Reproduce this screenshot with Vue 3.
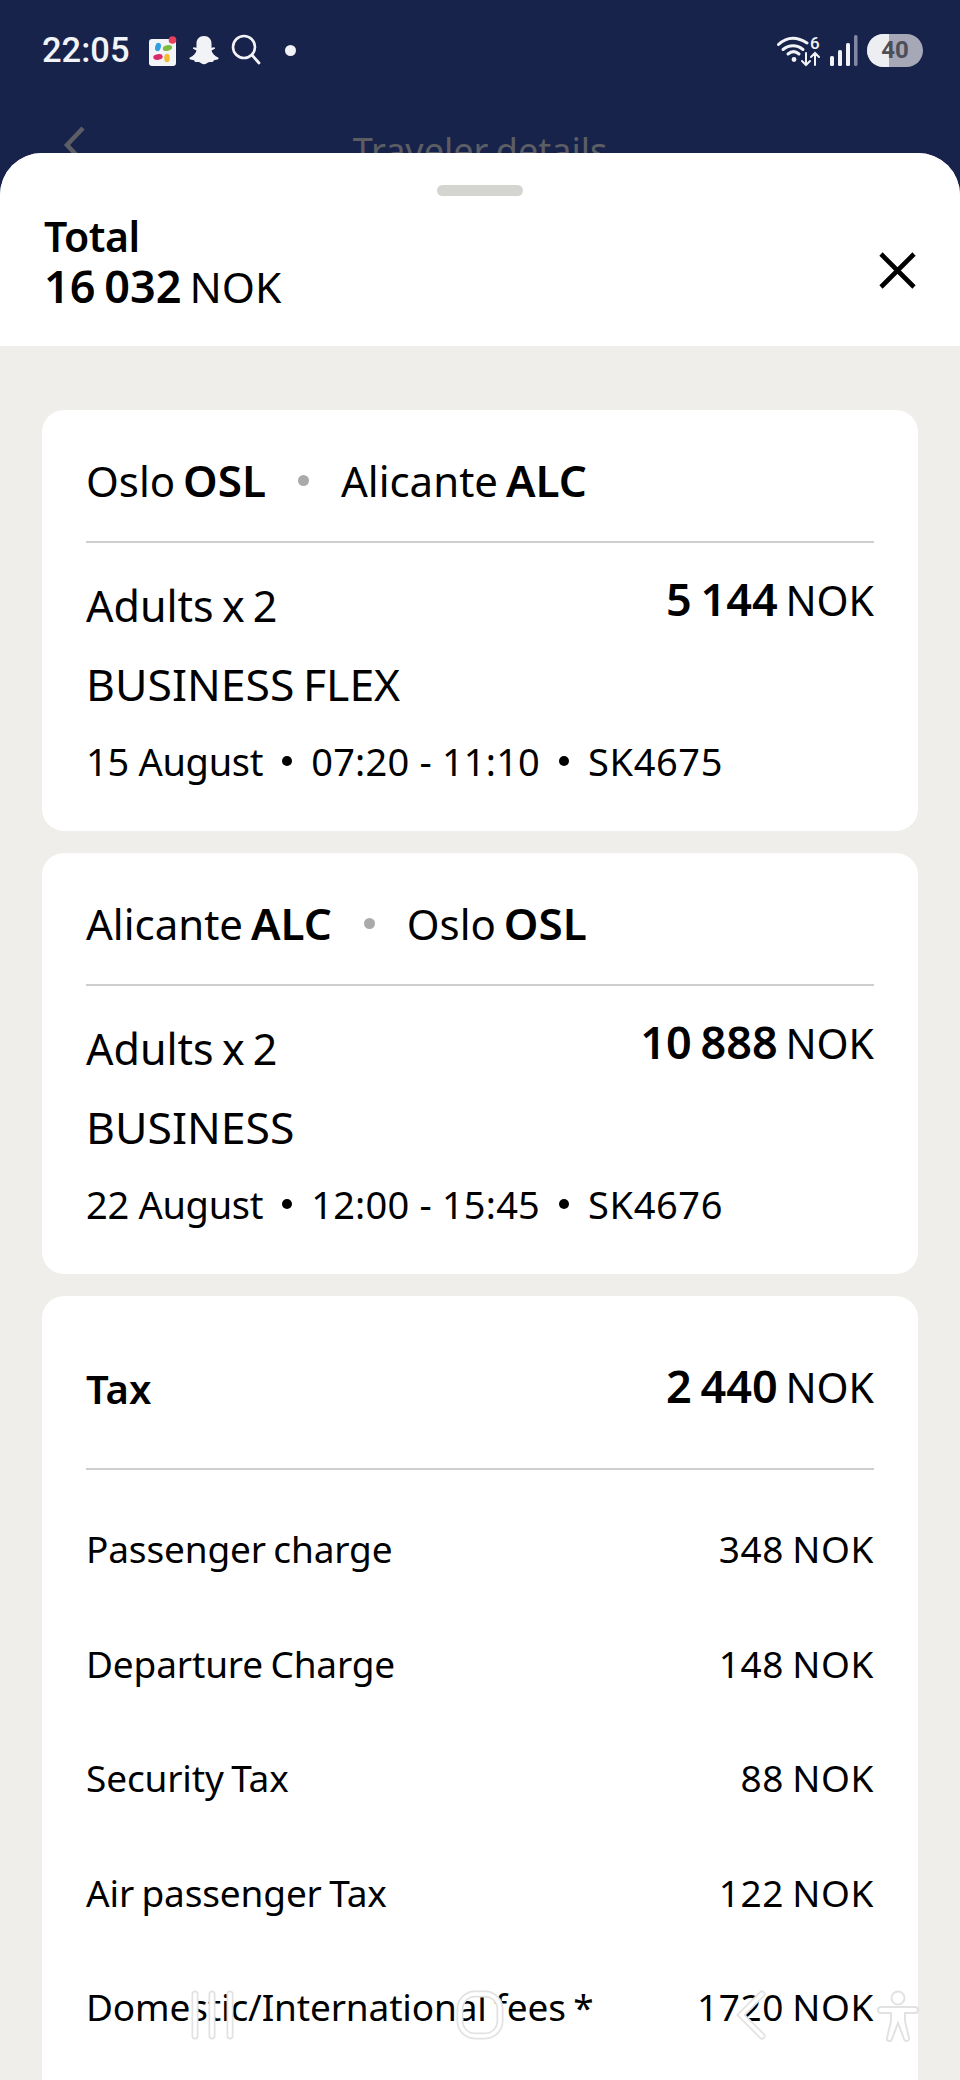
<script setup>
const flights = [
  { from: 'Oslo', fromCode: 'OSL', to: 'Alicante', toCode: 'ALC', price: '5 144', fare: 'BUSINESS FLEX', date: '15 August', time: '07:20 - 11:10', no: 'SK4675' },
  { from: 'Alicante', fromCode: 'ALC', to: 'Oslo', toCode: 'OSL', price: '10 888', fare: 'BUSINESS', date: '22 August', time: '12:00 - 15:45', no: 'SK4676' }
]
const taxes = [
  ['Passenger charge', '348 NOK'],
  ['Departure Charge', '148 NOK'],
  ['Security Tax', '88 NOK'],
  ['Air passenger Tax', '122 NOK'],
  ['Domestic/International fees *', '1720 NOK']
]
</script>

<template>
  <div class="screen">
    <div class="top">
      <div class="status">
        <div class="status-left">
          <span class="clock">22:05</span>
          <svg class="ic-slack" width="30" height="32" viewBox="0 0 30 32">
            <rect x="0" y="5" width="27" height="27" rx="3" fill="#f3f4f8"/>
            <ellipse cx="9" cy="13" rx="2.800" ry="4.200" fill="#2f9fe0" transform="rotate(15 9 13)"/>
            <ellipse cx="18.500" cy="14" rx="4.800" ry="2.800" fill="#7dbb3f" transform="rotate(-15 18.500 14)"/>
            <ellipse cx="9" cy="23" rx="4.800" ry="2.800" fill="#d92a6c" transform="rotate(-10 9 23)"/>
            <ellipse cx="18" cy="24" rx="2.800" ry="4.200" fill="#efbc34"/>
            <circle cx="23.500" cy="6" r="3.800" fill="#e8405a"/>
          </svg>
          <svg class="ic-snap" width="32" height="32" viewBox="0 0 34 32">
            <path d="M17 1c5 0 8 3.500 8 8v4.500l3-.5c1 .5 1 1.500 0 2l-3 1.500c.5 3 3.500 6 7 7.500 1 .5.500 1.500-.5 2l-4 1c-.5 1.500-1 2-2.500 1.800-2-.3-3.500 0-5 1.200-2 1.500-4 1.500-6 0-1.500-1.200-3-1.500-5-1.200-1.500.2-2-.3-2.500-1.800l-4-1c-1-.5-1.500-1.500-.5-2 3.500-1.500 6.500-4.500 7-7.500l-3-1.500c-1-.5-1-1.500 0-2l3 .5V9c0-4.500 3-8 8-8z" fill="#f2f3f7"/>
          </svg>
          <svg class="ic-search" width="30" height="32" viewBox="0 0 30 32">
            <circle cx="13" cy="13" r="11" fill="none" stroke="#f2f3f7" stroke-width="2.600"/>
            <path d="M21 21l7 8" stroke="#f2f3f7" stroke-width="2.800" stroke-linecap="round"/>
          </svg>
          <span class="dot"></span>
        </div>
        <div class="status-right">
          <svg class="ic-wifi" width="44" height="34" viewBox="0 0 44 34" fill="none" stroke="#f2f3f7" stroke-linecap="round">
            <path d="M1.500 11.500C10 3.500 20 3.500 30 10" stroke-width="3"/>
            <path d="M6 16.500c6-5 14-5 20 0" stroke-width="3"/>
            <path d="M11 21c3.500-3 7.500-3 11 0" stroke-width="3"/>
            <circle cx="17" cy="26.500" r="2.400" fill="#f2f3f7" stroke="none"/>
            <path d="M29 20v12m-4-4l4 4 4-4M38 32V20m-4 4l4-4 4 4" stroke-width="2"/>
            <text x="33" y="16" class="six">6</text>
          </svg>
          <svg width="30" height="32" viewBox="0 0 30 32">
            <rect x="1" y="22" width="4" height="10" rx="1.500" fill="#f2f3f7"/>
            <rect x="9" y="16" width="4" height="16" rx="1.500" fill="#f2f3f7"/>
            <rect x="17" y="9" width="4" height="23" rx="1.500" fill="#f2f3f7"/>
            <rect x="25" y="1" width="3.500" height="31" rx="1.500" fill="#8288a4"/>
          </svg>
          <div class="battery"><span class="fill"></span><span class="pct">40</span></div>
        </div>
      </div>
      <div class="nav">
        <svg class="back" width="24" height="40" viewBox="0 0 24 40" fill="none"><path d="M21 3L5 20l16 17" stroke="#5c5e64" stroke-width="4.500"/></svg>
        <span class="nav-title">Traveler details</span>
      </div>
    </div>

    <div class="sheet">
      <header class="head">
        <div class="grab"></div>
        <div class="head-row">
          <div class="total">
            <div class="total-label">Total</div>
            <div class="total-val"><b>16 032</b> NOK</div>
          </div>
          <svg class="close" width="38" height="38" viewBox="0 0 38 38"><path d="M3 3l33 33M36 3L3 36" stroke="#000" stroke-width="4.600"/></svg>
        </div>
      </header>

      <main class="body">
        <section v-for="f in flights" :key="f.no" class="card">
          <div class="route">
            <span>{{ f.from }} <b>{{ f.fromCode }}</b></span>
            <i class="sep"></i>
            <span>{{ f.to }} <b>{{ f.toCode }}</b></span>
          </div>
          <div class="rule"></div>
          <div class="pax">
            <span class="adults">Adults x 2</span>
            <span class="price"><b>{{ f.price }}</b> NOK</span>
          </div>
          <div class="fare">{{ f.fare }}</div>
          <div class="meta">
            <span>{{ f.date }}</span><i></i><span class="time">{{ f.time }}</span><i></i><span class="flight">{{ f.no }}</span>
          </div>
        </section>

        <section class="card tax">
          <div class="tax-head">
            <b class="tax-title">Tax</b>
            <span class="price"><b>2 440</b> NOK</span>
          </div>
          <div class="rule"></div>
          <div class="tax-list">
            <div v-for="t in taxes" :key="t[0]" class="tax-row">
              <span>{{ t[0] }}</span><span class="amount">{{ t[1] }}</span>
            </div>
          </div>
        </section>
      </main>
    </div>

    <svg class="gesture g1" width="44" height="50" viewBox="0 0 44 50" fill="none" stroke-linecap="round">
      <path d="M5 4v42M22 4v42M40 4v42" stroke="#e2e2e2" stroke-width="7"/>
      <path d="M5 4v42M22 4v42M40 4v42" stroke="#fff" stroke-width="3.500"/>
    </svg>
    <svg class="gesture g2" width="48" height="50" viewBox="0 0 48 50" fill="none">
      <rect x="4" y="4" width="40" height="42" rx="15" stroke="#e2e2e2" stroke-width="7"/>
      <rect x="4" y="4" width="40" height="42" rx="15" stroke="#fff" stroke-width="3.500"/>
    </svg>
    <svg class="gesture g3" width="32" height="50" viewBox="0 0 32 50" fill="none" stroke-linecap="round">
      <path d="M27 4L6 25l21 21" stroke="#e2e2e2" stroke-width="7"/>
      <path d="M27 4L6 25l21 21" stroke="#fff" stroke-width="3.500"/>
    </svg>
    <svg class="gesture g4" width="42" height="52" viewBox="0 0 42 52" fill="#fff" stroke="#e2e2e2" stroke-width="2">
      <circle cx="21" cy="8" r="6.500"/>
      <path d="M4 17h34a3 3 0 0 1 0 6H28v8l4 17a2.500 2.500 0 0 1-5 1l-6-16-6 16a2.500 2.500 0 0 1-5-1l4-17v-8H4a3 3 0 0 1 0-6z"/>
    </svg>
  </div>
</template>

<style>
html, body { margin: 0; background: #fff; }
</style>

<style scoped>
.screen {
  position: relative;
  width: 960px;
  height: 2080px;
  overflow: hidden;
  background: #18234c;
  font-family: "Noto Sans", Lato, sans-serif;
  color: #000;
}
.top { height: 153px; overflow: hidden; }
.status {
  display: flex;
  justify-content: space-between;
  align-items: center;
  padding: 32px 37px 0 42px;
  height: 36px;
}
.status-left, .status-right { display: flex; align-items: center; }
.clock { font: 500 34.500px Roboto, sans-serif; color: #f2f3f7; margin-right: 19px; }
.ic-snap { margin-left: 9px; }
.ic-search { margin-left: 11px; }
.dot { width: 11px; height: 11px; border-radius: 50%; background: #f2f3f7; margin-left: 24px; }
.status-right { gap: 8px; }
.six { font: 500 17px Roboto, sans-serif; fill: #f2f3f7; stroke: none; }
.battery {
  position: relative;
  width: 56px;
  height: 33px;
  border-radius: 17px;
  overflow: hidden;
  background: #a6a8b8;
  display: flex;
  align-items: center;
  justify-content: center;
}
.fill { position: absolute; left: 0; top: 0; bottom: 0; width: 22px; background: #eceef2; }
.pct { position: relative; font: 700 24px Roboto, sans-serif; color: #4c4e58; }
.nav { position: relative; height: 85px; }
.back { position: absolute; left: 62px; top: 57px; }
.nav-title {
  position: absolute;
  left: 0;
  right: 0;
  top: 58px;
  text-align: center;
  font-size: 36px;
  word-spacing: -2px;
  color: #5c5e64;
}
.sheet {
  height: 1927px;
  border-radius: 42px 42px 0 0;
  background: #efeeeb;
  overflow: hidden;
}
.head { background: #fff; height: 193px; position: relative; box-sizing: border-box; padding-top: 32px; }
.grab { width: 86px; height: 11px; border-radius: 6px; background: #d4d4d0; margin: 0 auto; }
.head-row { display: flex; justify-content: space-between; align-items: center; padding: 15px 44px 0 44px; }
.total { font-size: 42.500px; line-height: 50px; word-spacing: -3px; }
.total-label { font-weight: 600; font-size: 41px; letter-spacing: -0.500px; }
.total-val b { font-size: 45px; word-spacing: -3px; }
b { font-weight: 600; }
.close { margin-top: 17px; }
.body { padding: 64px 42px 0; display: flex; flex-direction: column; gap: 22px; }
.card { background: #fff; border-radius: 22px; padding: 0 44px; height: 421px; box-sizing: border-box; font-size: 42px; word-spacing: -3px; }
.route { height: 131px; display: flex; align-items: center; gap: 32px; padding-top: 9px; box-sizing: border-box; }
.route b { font-size: 44px; }
.sep { width: 11px; height: 11px; border-radius: 50%; background: #aaa; }
.rule { height: 2px; background: #cfcfcf; }
.pax { display: flex; justify-content: space-between; height: 80px; padding-top: 31px; line-height: 56px; }
.adults { font-size: 43px; padding-top: 4px; }
.price { line-height: 50px; font-size: 41px; }
.price b { font-size: 45px; word-spacing: -3px; }
.fare { line-height: 56px; margin-top: 2px; font-size: 44.500px; }
.meta { font-size: 38px; letter-spacing: -0.300px; margin-top: 23px; display: flex; align-items: center; gap: 19px; line-height: 52px; word-spacing: 0; }
.meta i { width: 10px; height: 10px; border-radius: 50%; background: #000; }
.meta .time { letter-spacing: 0.200px; }
.meta .flight { letter-spacing: 0.600px; }
.tax { height: auto; padding-bottom: 60px; }
.tax-head { height: 172px; display: flex; justify-content: space-between; align-items: center; padding-top: 9px; box-sizing: border-box; }
.tax-title { font-size: 40px; margin-top: 4px; }
.tax-list { padding-top: 54px; font-size: 37px; letter-spacing: -0.150px; word-spacing: -2px; }
.tax-row { display: flex; justify-content: space-between; height: 114.500px; line-height: 50px; }
.amount { letter-spacing: 0.600px; }
.gesture { position: absolute; }
.g1 { left: 190px; top: 1990px; }
.g2 { left: 456px; top: 1990px; }
.g3 { left: 735px; top: 1990px; }
.g4 { left: 877px; top: 1990px; }
</style>
